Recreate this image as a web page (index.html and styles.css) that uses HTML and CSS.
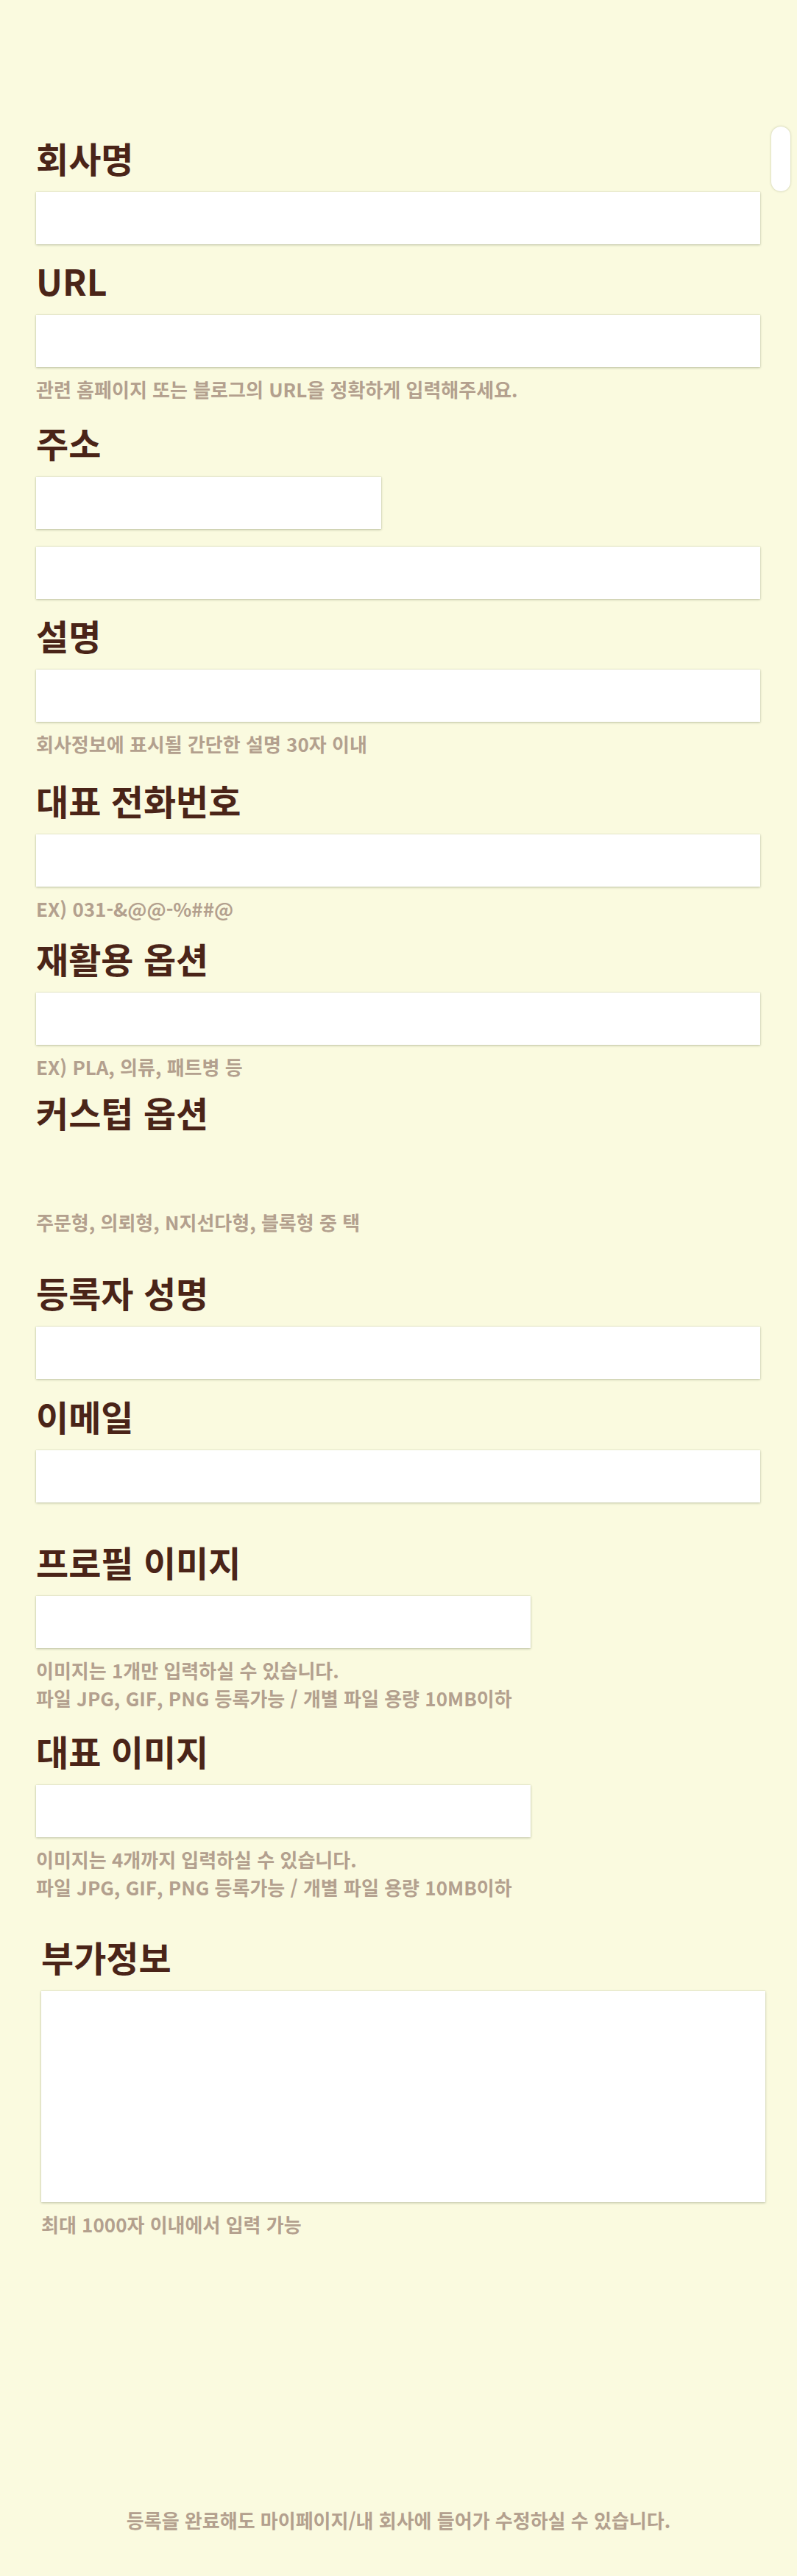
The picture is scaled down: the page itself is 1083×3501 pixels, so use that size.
FILE: index.html
```html
<!DOCTYPE html>
<html lang="ko">
<head>
<meta charset="utf-8">
<title>회사 등록</title>
<link rel="stylesheet" href="styles.css">
</head>
<body>
<div class="page">
  <div class="scroll-thumb"></div>
  <form class="form">
    <div class="field field--first">
      <label class="label">회사명</label>
      <input class="input" type="text">
    </div>

    <div class="field gap-27">
      <label class="label">URL</label>
      <input class="input" type="text">
      <p class="help">관련 홈페이지 또는 블로그의 URL을 정확하게 입력해주세요.</p>
    </div>

    <div class="field gap-31">
      <label class="label">주소</label>
      <input class="input input--half" type="text">
      <input class="input input--next" type="text">
    </div>

    <div class="field gap-27">
      <label class="label">설명</label>
      <input class="input" type="text">
      <p class="help">회사정보에 표시될 간단한 설명 30자 이내</p>
    </div>

    <div class="field gap-35">
      <label class="label">대표 전화번호</label>
      <input class="input" type="text">
      <p class="help">EX) 031-&amp;@@-%##@</p>
    </div>

    <div class="field gap-26">
      <label class="label">재활용 옵션</label>
      <input class="input" type="text">
      <p class="help">EX) PLA, 의류, 패트병 등</p>
    </div>

    <div class="field gap-20">
      <label class="label">커스텁 옵션</label>
      <div class="options"></div>
      <p class="help">주문형, 의뢰형, N지선다형, 블록형 중 택</p>
    </div>

    <div class="field gap-54">
      <label class="label">등록자 성명</label>
      <input class="input" type="text">
    </div>

    <div class="field gap-28">
      <label class="label">이메일</label>
      <input class="input" type="text">
    </div>

    <div class="field gap-58">
      <label class="label">프로필 이미지</label>
      <div class="input input--file"></div>
      <p class="help">이미지는 1개만 입력하실 수 있습니다.<br>파일 JPG, GIF, PNG 등록가능 / 개별 파일 용량 10MB이하</p>
    </div>

    <div class="field gap-30">
      <label class="label">대표 이미지</label>
      <div class="input input--file"></div>
      <p class="help">이미지는 4개까지 입력하실 수 있습니다.<br>파일 JPG, GIF, PNG 등록가능 / 개별 파일 용량 10MB이하</p>
    </div>

    <div class="field field--shift gap-53">
      <label class="label">부가정보</label>
      <textarea class="input textarea"></textarea>
      <p class="help">최대 1000자 이내에서 입력 가능</p>
    </div>
  </form>

  <p class="notice">등록을 완료해도 마이페이지/내 회사에 들어가 수정하실 수 있습니다.</p>
</div>
</body>
</html>
```

FILE: styles.css
```css
html, body {
  margin: 0;
  padding: 0;
}

body {
  background: #fafadf;
  font-family: "Noto Sans CJK KR", "Noto Sans", sans-serif;
  color: #4a2418;
}

.page {
  position: relative;
  min-height: 3501px;
}

.scroll-thumb {
  position: absolute;
  left: 1048px;
  top: 172px;
  width: 26px;
  height: 88px;
  border-radius: 13px;
  background: #ffffff;
  box-shadow: 0 0 3px rgba(80, 90, 40, 0.35);
}

.form {
  margin: 0;
  padding: 192px 0 0 49px;
}

.field {
  display: flex;
  flex-direction: column;
  align-items: flex-start;
}

.field--shift {
  padding-left: 7px;
}

.gap-20 { margin-top: 20px; }
.gap-26 { margin-top: 26px; }
.gap-27 { margin-top: 27px; }
.gap-28 { margin-top: 28px; }
.gap-30 { margin-top: 30px; }
.gap-31 { margin-top: 31px; }
.gap-35 { margin-top: 35px; }
.gap-53 { margin-top: 53px; }
.gap-54 { margin-top: 54px; }
.gap-58 { margin-top: 58px; }

.label {
  display: block;
  font-size: 48px;
  line-height: 44px;
  font-weight: 700;
  color: #4a2418;
}

.input {
  display: block;
  box-sizing: border-box;
  width: 984px;
  height: 71px;
  margin: 25px 0 0 0;
  padding: 0 16px;
  border: 0;
  border-radius: 0;
  background: #ffffff;
  box-shadow: 0 1px 3px rgba(60, 70, 30, 0.3), 0 0 1px rgba(60, 70, 30, 0.25);
  font: inherit;
  outline: none;
}

.input--half {
  width: 469px;
}

.input--next {
  margin-top: 24px;
}

.input--file {
  width: 672px;
}

.textarea {
  height: 287px;
  resize: none;
}

.options {
  height: 98px;
}

.help {
  margin: 11px 0 0 0;
  font-size: 26px;
  line-height: 38px;
  font-weight: 700;
  color: #b3a08e;
}

.notice {
  margin: 364px 0 0 0;
  text-align: center;
  font-size: 26px;
  line-height: 38px;
  font-weight: 700;
  color: #b3a08e;
}
```
